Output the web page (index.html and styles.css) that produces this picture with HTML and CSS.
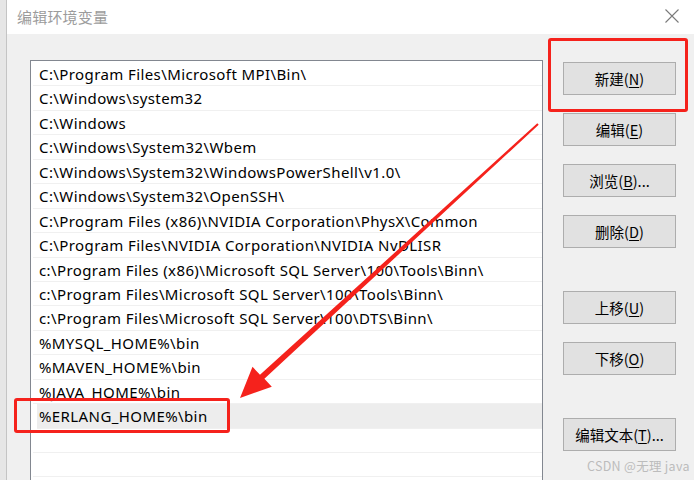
FILE: index.html
```html
<!DOCTYPE html>
<html lang="zh-CN">
<head>
<meta charset="utf-8">
<title>编辑环境变量</title>
<link rel="stylesheet" href="styles.css">
</head>
<body>
<div class="window">
  <div class="titlebar">
    <span class="title">编辑环境变量</span>
    <svg class="close" width="14" height="14" viewBox="0 0 14 14"><path d="M0.5 0.5 L13.5 13.5 M13.5 0.5 L0.5 13.5" stroke="#7a7a7a" stroke-width="1.1" fill="none"/></svg>
  </div>
  <div class="content">
    <div class="list">
      <div class="row">C:\Program Files\Microsoft MPI\Bin\</div>
      <div class="row">C:\Windows\system32</div>
      <div class="row">C:\Windows</div>
      <div class="row">C:\Windows\System32\Wbem</div>
      <div class="row">C:\Windows\System32\WindowsPowerShell\v1.0\</div>
      <div class="row">C:\Windows\System32\OpenSSH\</div>
      <div class="row">C:\Program Files (x86)\NVIDIA Corporation\PhysX\Common</div>
      <div class="row">C:\Program Files\NVIDIA Corporation\NVIDIA NvDLISR</div>
      <div class="row">c:\Program Files (x86)\Microsoft SQL Server\100\Tools\Binn\</div>
      <div class="row">c:\Program Files\Microsoft SQL Server\100\Tools\Binn\</div>
      <div class="row">c:\Program Files\Microsoft SQL Server\100\DTS\Binn\</div>
      <div class="row">%MYSQL_HOME%\bin</div>
      <div class="row">%MAVEN_HOME%\bin</div>
      <div class="row">%JAVA_HOME%\bin</div>
      <div class="row selected">%ERLANG_HOME%\bin</div>
      <div class="row"></div>
      <div class="row"></div>
    </div>
    <div class="buttons">
      <button class="btn">新建(<u>N</u>)</button>
      <button class="btn">编辑(<u>E</u>)</button>
      <button class="btn">浏览(<u>B</u>)...</button>
      <button class="btn">删除(<u>D</u>)</button>
      <button class="btn btn-group">上移(<u>U</u>)</button>
      <button class="btn">下移(<u>O</u>)</button>
      <button class="btn btn-group">编辑文本(<u>T</u>)...</button>
    </div>
  </div>

  <div class="mark mark-new"></div>
  <div class="mark mark-row"></div>
  <svg class="arrow" width="694" height="480" viewBox="0 0 694 480">
    <polygon fill="#f5221c" points="537.3,123.3 260.0,374.8 252.5,366.8 240,398 271.8,386.7 264.4,378.8 538.7,124.7"/>
  </svg>
  <div class="watermark">CSDN @无理 java</div>
</div>
</body>
</html>
```

FILE: styles.css
```css
html, body {
  margin: 0;
  padding: 0;
  width: 694px;
  height: 480px;
  overflow: hidden;
  background: #f0f0f0;
}

.window {
  position: relative;
  width: 694px;
  height: 480px;
  display: flex;
  flex-direction: column;
  box-sizing: border-box;
  border-left: 6px solid #e6e6e6;
  font-family: "Noto Sans", "Noto Sans CJK SC", sans-serif;
}

.window::before {
  content: "";
  position: absolute;
  left: 0;
  top: 0;
  bottom: 0;
  width: 1px;
  background: #c4c4c4;
}

.titlebar {
  height: 34px;
  flex: none;
  background: #ffffff;
  display: flex;
  align-items: center;
  justify-content: space-between;
  padding: 0 15px 0 11px;
  box-sizing: border-box;
}

.title {
  font-family: "Noto Sans CJK SC", sans-serif;
  font-size: 15px;
  color: #9c9c9c;
  letter-spacing: 0.2px;
  margin-top: -2px;
}

.close {
  display: block;
  margin-top: -3px;
}

.content {
  flex: 1;
  display: flex;
  align-items: flex-start;
  padding: 26px 0 0 24px;
  background: #f0f0f0;
  min-height: 0;
}

.list {
  width: 513px;
  box-sizing: border-box;
  border: 1px solid #828790;
  border-bottom: none;
  background: #ffffff;
  height: 430px;
  padding: 1px 0 0 2px;
}

.row {
  height: 24.45px;
  box-sizing: border-box;
  border-bottom: 1px solid #f0f0f0;
  padding-left: 6px;
  font-size: 15px;
  letter-spacing: 0.4px;
  line-height: 25px;
  color: #000000;
  white-space: nowrap;
  overflow: hidden;
}

.row.selected {
  background: #ededed;
  margin-left: 4px;
  padding-left: 2px;
}

.buttons {
  margin-left: 20px;
  width: 113px;
  display: flex;
  flex-direction: column;
  gap: 18px;
  padding-top: 2px;
}

.btn {
  height: 33px;
  width: 113px;
  background: #e1e1e1;
  border: 1px solid #adadad;
  border-radius: 0;
  font-family: "Noto Sans CJK SC", sans-serif;
  font-size: 14.5px;
  color: #000000;
  padding: 0 0 1px 0;
  margin: 0;
}

.btn u {
  text-underline-offset: 2px;
}

.btn-group {
  margin-top: 25px;
}

.mark {
  position: absolute;
  border: 3px solid #f5221c;
  border-radius: 3px;
  box-sizing: border-box;
}

.mark-new {
  left: 542px;
  top: 38px;
  width: 140px;
  height: 74px;
}

.mark-row {
  left: 8px;
  top: 398px;
  width: 216px;
  height: 35px;
}

.arrow {
  position: absolute;
  left: -6px;
  top: 0;
  pointer-events: none;
}

.watermark {
  position: absolute;
  left: 581px;
  top: 456px;
  font-family: "Noto Sans CJK SC", sans-serif;
  font-size: 12.5px;
  color: #bcbcbc;
  letter-spacing: 0.3px;
}
```
